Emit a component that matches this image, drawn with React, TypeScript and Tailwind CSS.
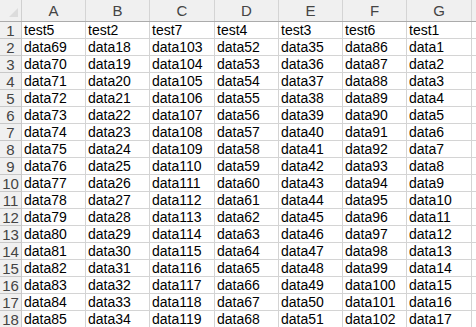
import React from 'react';

const columns: { letter: string; head: string; start: number; width: string }[] = [
  { letter: 'A', head: 'test5', start: 69, width: 'w-[64px]' },
  { letter: 'B', head: 'test2', start: 18, width: 'w-[64px]' },
  { letter: 'C', head: 'test7', start: 103, width: 'w-[65px]' },
  { letter: 'D', head: 'test4', start: 52, width: 'w-[64px]' },
  { letter: 'E', head: 'test3', start: 35, width: 'w-[64px]' },
  { letter: 'F', head: 'test6', start: 86, width: 'w-[64px]' },
  { letter: 'G', head: 'test1', start: 1, width: 'w-[65px]' },
];

const ROWS = 18;

const App: React.FC = () => {
  return (
    <div className="h-[327px] w-[476px] overflow-hidden bg-white font-['Liberation_Sans',Arial,sans-serif]">
      {/* Column letters */}
      <div className="flex h-[22px] border-b border-[#ababab] bg-[#f0f0f0]">
        <div className="flex w-[22px] shrink-0 items-end justify-end border-r border-[#d0d0d0] pr-[3px] pb-[4px]">
          <svg width="9" height="9" viewBox="0 0 9 9">
            <polygon points="9,0 9,9 0,9" fill="#dcdcdc" />
          </svg>
        </div>
        {columns.map((col) => (
          <div
            key={col.letter}
            className={`${col.width} flex shrink-0 items-center justify-center border-r border-[#d4d4d4] pt-[2px] text-[15px] text-[#444]`}
          >
            {col.letter}
          </div>
        ))}
        <div className="flex-1" />
      </div>

      {/* Rows */}
      {Array.from({ length: ROWS }, (_, r) => (
        <div key={r} className="flex h-[17px]">
          <div className="flex w-[22px] shrink-0 items-center justify-center border-r border-b border-[#c8c8c8] bg-[#f0f0f0] text-[15px] leading-none text-[#444]">
            {r + 1}
          </div>
          {columns.map((col) => (
            <div
              key={col.letter}
              className={`${col.width} flex shrink-0 items-center border-r border-b border-[#d4d4d4] pl-[2px] text-[14px] leading-none text-black`}
            >
              {r === 0 ? col.head : `data${col.start + r - 1}`}
            </div>
          ))}
          <div className="flex-1 border-b border-[#d4d4d4]" />
        </div>
      ))}
    </div>
  );
};

export default App;
